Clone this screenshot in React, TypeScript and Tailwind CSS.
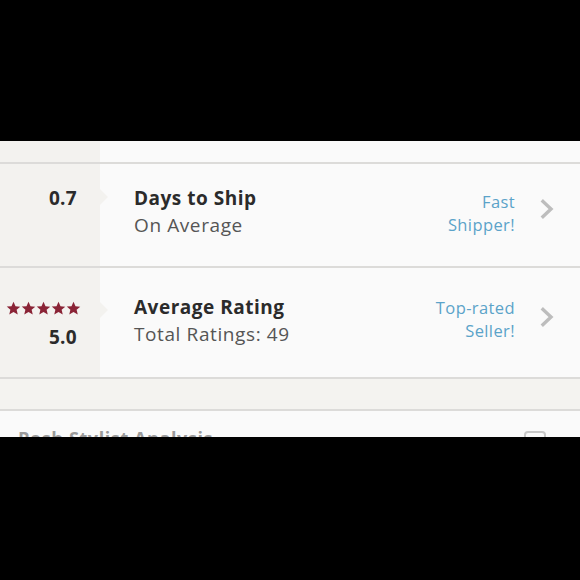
import { Fragment } from 'react';

const font = { fontFamily: '"Open Sans", Lato, sans-serif' };

function Star() {
  return (
    <svg viewBox="0 0 24 24" className="h-[15px] w-[15px]" fill="#8a2436">
      <path d="M12 1.2l3.2 7.1 7.6.7-5.8 5.1 1.8 7.6L12 17.7l-6.8 3.9 1.8-7.6-5.8-5.1 7.6-.7z" />
    </svg>
  );
}

function Chevron() {
  return (
    <svg viewBox="0 0 16 20" className="h-[20px] w-[16px]" fill="none" stroke="#bdbdbd" strokeWidth="3.4" strokeLinecap="square">
      <path d="M3 2.5l8 7.5-8 7.5" />
    </svg>
  );
}

function Notch({ top }: { top: string }) {
  return (
    <div
      className={`absolute left-[100px] ${top} h-0 w-0 border-y-[8px] border-l-[8px] border-y-transparent border-l-[#f3f2ef]`}
    />
  );
}

const rows = [
  {
    height: 'h-[102px]',
    pad: 'pt-[21px]',
    labelPad: 'pt-[26px]',
    chevPad: 'pt-[35px]',
    notch: 'top-[25px]',
    title: 'Days to Ship',
    sub: 'On Average',
    label: ['Fast', 'Shipper!'],
    stars: false,
    value: '0.7',
  },
  {
    height: 'h-[109px]',
    pad: 'pt-[26px]',
    labelPad: 'pt-[28px]',
    chevPad: 'pt-[39px]',
    notch: 'top-[34px]',
    title: 'Average Rating',
    sub: 'Total Ratings: 49',
    label: ['Top-rated', 'Seller!'],
    stars: true,
    value: '5.0',
  },
];

export default function App() {
  return (
    <div className="flex h-[580px] w-[580px] flex-col bg-black" style={font}>
      <div className="h-[141px] shrink-0" />
      <div className="flex h-[296px] shrink-0 flex-col bg-[#fafafa]">
        <div className="flex h-[21px] shrink-0">
          <div className="w-[100px] bg-[#f3f2ef]" />
        </div>
        {rows.map((r) => (
          <Fragment key={r.title}>
            <div className="h-[2px] shrink-0 bg-[#dcdbd9]" />
            <div className={`relative flex ${r.height} shrink-0`}>
              <div className={`flex w-[100px] flex-col items-end bg-[#f3f2ef] pr-[23px] ${r.pad}`}>
                {r.stars ? (
                  <>
                    <div className="mr-[-4px] mt-[7px] flex">
                      <Star />
                      <Star />
                      <Star />
                      <Star />
                      <Star />
                    </div>
                    <div className="mt-[8px] text-[19px] font-bold leading-[27px] tracking-[0.3px] text-[#2b2b2b]">{r.value}</div>
                  </>
                ) : (
                  <div className="text-[19px] font-bold leading-[27px] tracking-[0.3px] text-[#2b2b2b]">{r.value}</div>
                )}
              </div>
              <Notch top={r.notch} />
              <div className={`flex-1 pl-[34px] ${r.pad}`}>
                <div className="text-[19px] font-bold leading-[27px] tracking-[0.5px] text-[#2b2b2b]">{r.title}</div>
                <div className="text-[19px] leading-[27px] tracking-[0.6px] text-[#555555]">{r.sub}</div>
              </div>
              <div className={`text-right text-[16.5px] leading-[23px] tracking-[0.4px] text-[#5ba3c9] ${r.labelPad}`}>
                <div>{r.label[0]}</div>
                <div>{r.label[1]}</div>
              </div>
              <div className={`w-[65px] pl-[25px] ${r.chevPad}`}>
                <Chevron />
              </div>
            </div>
          </Fragment>
        ))}
        <div className="h-[2px] shrink-0 bg-[#dcdbd9]" />
        <div className="h-[30px] shrink-0 bg-[#f4f3f0]" />
        <div className="h-[2px] shrink-0 bg-[#dcdbd9]" />
        <div className="flex flex-1 items-start justify-between overflow-hidden pl-[18px] pr-[34px] pt-[15px]">
          <div className="text-[18px] font-bold leading-[24px] tracking-[0.6px] text-[#9b9b9b]">Posh Stylist Analysis</div>
          <div className="mt-[5px] h-[18px] w-[22px] rounded-[4px] border-2 border-[#c8c8c8]" />
        </div>
      </div>
      <div className="flex-1" />
    </div>
  );
}
